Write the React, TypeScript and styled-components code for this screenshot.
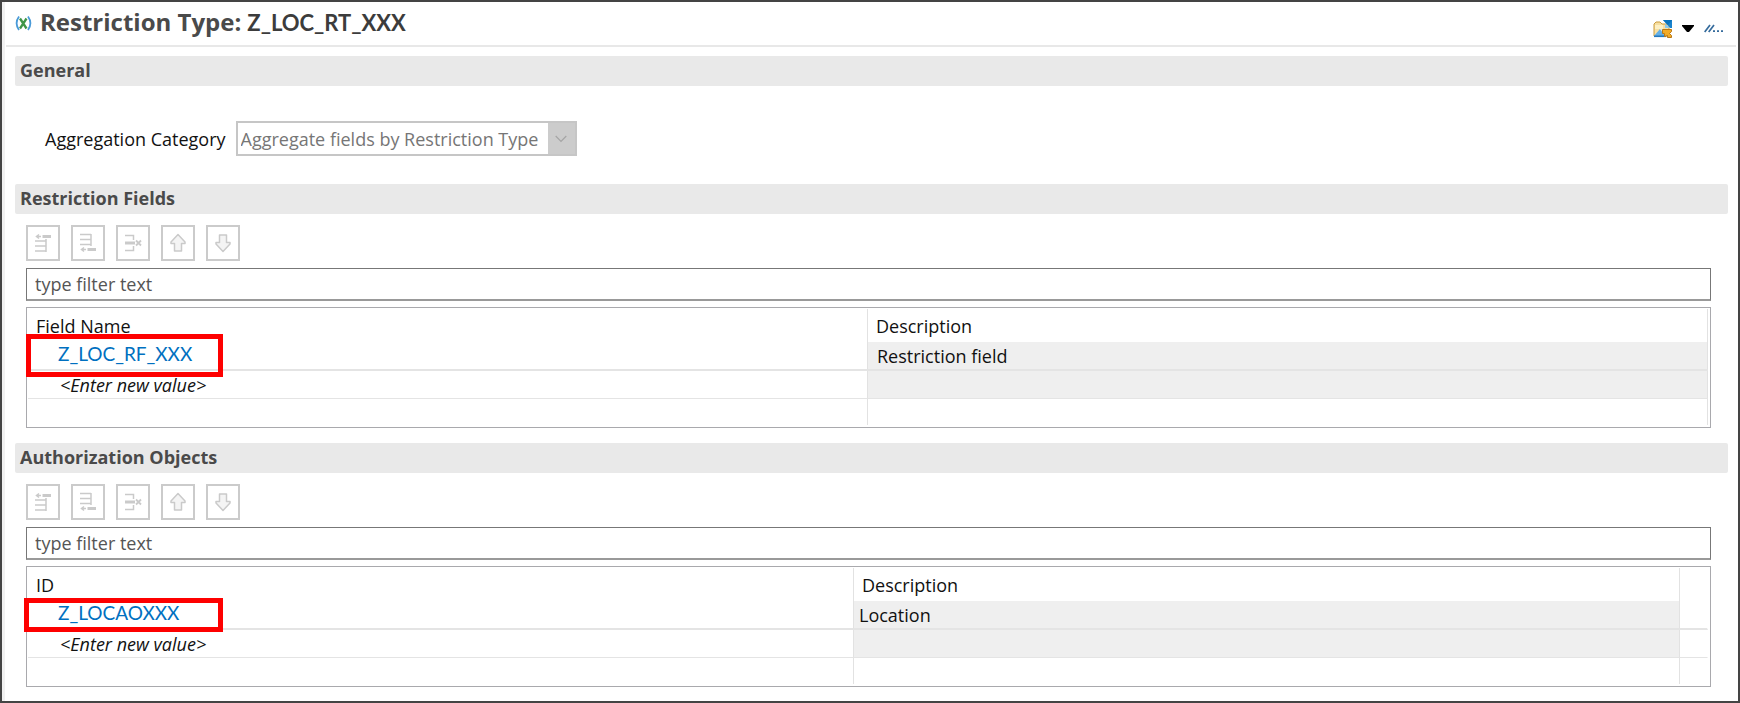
import React from 'react';
import styled, { createGlobalStyle } from 'styled-components';

const GlobalStyle = createGlobalStyle`
  *, *::before, *::after { box-sizing: border-box; }
  body {
    margin: 0;
    background: #fff;
    color: #111;
    font: 18px/24px "Open Sans", "Noto Sans", sans-serif;
  }
  button, input, select { font: inherit; }
`;

const Editor = styled.main`
  min-height: 100vh;
  border: 2px solid #444;
  background: #fff;
  box-shadow: inset 3px 0 #f1f1f1;
  padding: 0 2px 12px 4px;
`;

const Header = styled.header`
  display: flex;
  align-items: center;
  height: 45px;
  padding: 0 12px 0 9px;
  border-bottom: 2px solid #e8e8e8;
`;

const Title = styled.h1`
  display: flex;
  align-items: baseline;
  gap: 6px;
  margin: 0 auto 2px 8px;
  color: #4a4a4a;
  font-size: 24px;
  line-height: 32px;
  font-weight: 700;
  white-space: nowrap;
`;

const ObjectName = styled.span`
  color: #3c3c3c;
  font: 700 22px/32px Lato, sans-serif;
`;

const HeaderActions = styled.div`
  display: flex;
  align-items: center;
  gap: 10px;
  padding-top: 10px;
`;

const IconButton = styled.button`
  display: flex;
  padding: 0;
  border: 0;
  background: none;
`;

const Sections = styled.div`
  display: flex;
  flex-direction: column;
  gap: 15px;
  padding: 9px 8px 0 9px;
`;

const Section = styled.section`
  display: flex;
  flex-direction: column;
`;

const SectionTitle = styled.h2`
  margin: 0;
  padding: 2px 5px 4px;
  border-radius: 2px;
  background: #e9e9e9;
  color: #4a4a4a;
  font-size: 18px;
  line-height: 24px;
  font-weight: 700;
`;

const GeneralFields = styled.div`
  display: flex;
  align-items: center;
  gap: 10px;
  padding: 35px 30px 13px;
`;

const SelectBox = styled.div`
  display: grid;
  grid-template-columns: 1fr 27px;
  align-items: center;
  border: 2px solid #c6c6c6;
  background: linear-gradient(#ccc, #ccc) right / 27px 100% no-repeat #fff;
  svg { grid-area: 1 / 2; justify-self: center; pointer-events: none; }
`;

const Select = styled.select`
  grid-area: 1 / 1 / 2 / 3;
  width: 337px;
  height: 31px;
  padding: 0 30px 0 3px;
  border: 0;
  appearance: none;
  background: transparent;
  color: #767676;
  opacity: 1;
`;

const ListBody = styled.div`
  display: flex;
  flex-direction: column;
  padding: 11px 17px 0 11px;
`;

const Toolbar = styled.div`
  display: flex;
  gap: 11px;
  margin-bottom: 7px;
`;

const ToolButton = styled.button`
  display: flex;
  align-items: center;
  justify-content: center;
  width: 34px;
  height: 36px;
  padding: 0;
  border: 2px solid #cbcbcb;
  background: #fff;
`;

const Filter = styled.input`
  height: 33px;
  margin-bottom: 6px;
  padding: 0 8px;
  border: 1px solid #777;
  outline: 0;
  border-bottom: 2px solid #999;
  border-radius: 0;
  background: #fff;
  &::placeholder { color: #555; opacity: 1; }
`;

const TableFrame = styled.div`
  padding: 1px 2px 2px 1px;
  border: 1px solid #a9a9ad;
`;

const Table = styled.table`
  width: 100%;
  table-layout: fixed;
  border-collapse: separate;
  border-spacing: 0;
`;

const SpareCol = styled.col`
  width: 28px;
`;

const HeadCell = styled.th<{ $open?: boolean }>`
  height: 33px;
  padding: 0 8px;
  border-right: 1px solid ${(p) => (p.$open ? 'transparent' : '#e2e2e2')};
  font-weight: 400;
  text-align: left;
`;

const Cell = styled.td<{ $shaded?: boolean; $inset?: number; $open?: boolean; $thick?: boolean; $last?: boolean }>`
  position: relative;
  height: ${(p) => (p.$last ? 26 : p.$thick ? 29 : 28)}px;
  padding: 0 0 0 ${(p) => p.$inset ?? 9}px;
  border-right: 1px solid ${(p) => (p.$open ? 'transparent' : '#e2e2e2')};
  border-bottom: ${(p) => (p.$last ? 0 : p.$thick ? 2 : 1)}px solid #e4e4e4;
  background: ${(p) => (p.$shaded ? '#efefef' : 'transparent')};
  line-height: 24px;
`;

const NewValue = styled.em`
  padding-left: 32px;
`;

const ObjectLink = styled.a`
  display: block;
  margin-top: -3px;
  padding-left: 30px;
  color: #0070c0;
  font: 19px/24px Lato, sans-serif;
  text-decoration: none;
`;

/* Red frame that calls attention to the object link of a row. */
const Marker = styled.span<{ $compact?: boolean }>`
  position: absolute;
  z-index: 1;
  top: ${(p) => (p.$compact ? -3 : -8)}px;
  left: ${(p) => (p.$compact ? -4 : -2)}px;
  width: ${(p) => (p.$compact ? 199 : 197)}px;
  height: ${(p) => (p.$compact ? 34 : 43)}px;
  border: 5px solid #fe0000;
  pointer-events: none;
`;

const VariableIcon = () => (
  <svg width="17" height="17" viewBox="0 0 17 17" fill="none" aria-hidden="true">
    <path d="M4 1.500Q-.8 8.200 4 15" stroke="#4a9ad8" strokeWidth="1.8" />
    <path d="M13 1.500Q17.800 8.200 13 15" stroke="#4a9ad8" strokeWidth="1.8" />
    <path d="M5 3.500 11.500 13.500M11.500 3.500 5 13.500" stroke="#3f9548" strokeWidth="2.3" />
  </svg>
);

const FolderIcon = () => (
  <svg width="19" height="18" viewBox="0 0 19 18" fill="none" aria-hidden="true">
    <path d="M1 16V4l2-2h4l2 2h7v12z" fill="#f7dfa0" stroke="#c99a3d" />
    <path d="M2 5h8v4H2z" fill="#fdf0c4" />
    <path d="m1 16 6-7 5 7z" fill="#63afe6" />
    <path d="M1 16.300h12" stroke="#2477bd" strokeWidth="1.6" />
    <path d="M7 9h5v6z" fill="#cde7f8" />
    <path d="M10 0h9v8h-2z" fill="#1982cc" />
    <path d="M10 0h9l-4 5z" fill="#0873bd" />
    <path d="m12 4 5 4h-5z" fill="#8ac8ef" />
    <path d="M9.500 9.500h9v2l-2 2 2 2v2h-4v-2l-3 1v-3h-2z" fill="#f2ab25" stroke="#b97816" />
  </svg>
);

const CaretIcon = () => (
  <svg width="12" height="7" viewBox="0 0 12 7" aria-hidden="true">
    <path d="M0 0h12v1L7 7H5L0 1z" fill="#000" />
  </svg>
);

const OverflowIcon = () => (
  <svg width="20" height="9" viewBox="0 0 20 9" fill="none" aria-hidden="true">
    <path d="M.7 8 6 1M4.700 8 10 1" stroke="#356b9c" strokeWidth="1.7" />
    <path d="M9 7.200h2M13 7.200h2M17 7.200h2" stroke="#356b9c" strokeWidth="1.8" />
  </svg>
);

const ChevronIcon = () => (
  <svg width="12" height="8" viewBox="0 0 12 8" fill="none" aria-hidden="true">
    <path d="m.7 1 5.300 5.500L11.300 1" stroke="#a5a5a5" strokeWidth="1.2" />
  </svg>
);

const tools = [
  {
    label: 'Insert before',
    art: (
      <>
        <path d="M1 8h11M1 13h11M1 18h11M12 6v13" />
        <path d="M3 3.500h4M5 1.500l-2.500 2L5 5.500" />
        <path d="M8.500 3.500H17" strokeWidth="3" />
      </>
    ),
  },
  {
    label: 'Insert after',
    art: (
      <>
        <path d="M1 1.500h11M1 6.500h11M1 11.500h11M12 1v12" />
        <path d="M3 16.500h4M5 14.500l-2.500 2 2.500 2" />
        <path d="M8.500 16.500H17" strokeWidth="3" />
      </>
    ),
  },
  {
    label: 'Delete',
    art: (
      <>
        <path d="M1 2.500h8.500V7M1 17.500h8.500V13" />
        <path d="M1 10h10" strokeWidth="3" />
        <path d="m12 7.500 5 5M17 7.500l-5 5" strokeWidth="1.8" />
      </>
    ),
  },
  { label: 'Move up', art: <path d="M9 1.500 16 9v1.500h-3.500V18h-7v-7.500H2V9z" fill="#f4f4f4" strokeLinejoin="round" /> },
  { label: 'Move down', art: <path d="M9 18.500 2 11V9.500h3.500V2h7v7.500H16V11z" fill="#f4f4f4" strokeLinejoin="round" /> },
];

interface ListProps {
  title: string;
  keyColumn: string;
  object: string;
  description: string;
  spare?: boolean;
}

function ObjectList({ title, keyColumn, object, description, spare }: ListProps) {
  return (
    <Section>
      <SectionTitle>{title}</SectionTitle>
      <ListBody>
        <Toolbar>
          {tools.map((tool) => (
            <ToolButton key={tool.label} type="button" aria-label={tool.label} disabled>
              <svg width="18" height="20" viewBox="0 0 18 20" fill="none" stroke="#cacaca" strokeWidth="1.5" aria-hidden="true">
                {tool.art}
              </svg>
            </ToolButton>
          ))}
        </Toolbar>
        <Filter type="text" placeholder="type filter text" aria-label={`Filter ${title}`} />
        <TableFrame>
          <Table>
            <colgroup>
              <col />
              <col />
              {spare && <SpareCol />}
            </colgroup>
            <thead>
              <tr>
                <HeadCell scope="col">{keyColumn}</HeadCell>
                <HeadCell scope="col">Description</HeadCell>
                {spare && <HeadCell as="td" $open />}
              </tr>
            </thead>
            <tbody>
              <tr>
                <Cell $thick $inset={0}>
                  <Marker $compact={spare} />
                  <ObjectLink href="#">{object}</ObjectLink>
                </Cell>
                <Cell $thick $shaded $inset={spare ? 5 : 9}>{description}</Cell>
                {spare && <Cell $thick $open />}
              </tr>
              <tr>
                <Cell $inset={0}><NewValue>&lt;Enter new value&gt;</NewValue></Cell>
                <Cell $shaded />
                {spare && <Cell $open />}
              </tr>
              <tr>
                <Cell $last />
                <Cell $last />
                {spare && <Cell $last $open />}
              </tr>
            </tbody>
          </Table>
        </TableFrame>
      </ListBody>
    </Section>
  );
}

export default function App() {
  return (
    <>
      <GlobalStyle />
      <Editor>
        <Header>
          <VariableIcon />
          <Title>
            Restriction Type: <ObjectName>Z_LOC_RT_XXX</ObjectName>
          </Title>
          <HeaderActions>
            <IconButton type="button" aria-label="Open related object"><FolderIcon /></IconButton>
            <IconButton type="button" aria-label="Show menu"><CaretIcon /></IconButton>
            <IconButton type="button" aria-label="More actions"><OverflowIcon /></IconButton>
          </HeaderActions>
        </Header>
        <Sections>
          <Section>
            <SectionTitle>General</SectionTitle>
            <GeneralFields>
              <label htmlFor="aggregation">Aggregation Category</label>
              <SelectBox>
                <Select id="aggregation" disabled>
                  <option>Aggregate fields by Restriction Type</option>
                </Select>
                <ChevronIcon />
              </SelectBox>
            </GeneralFields>
          </Section>
          <ObjectList
            title="Restriction Fields"
            keyColumn="Field Name"
            object="Z_LOC_RF_XXX"
            description="Restriction field"
          />
          <ObjectList
            title="Authorization Objects"
            keyColumn="ID"
            object="Z_LOCAOXXX"
            description="Location"
            spare
          />
        </Sections>
      </Editor>
    </>
  );
}
